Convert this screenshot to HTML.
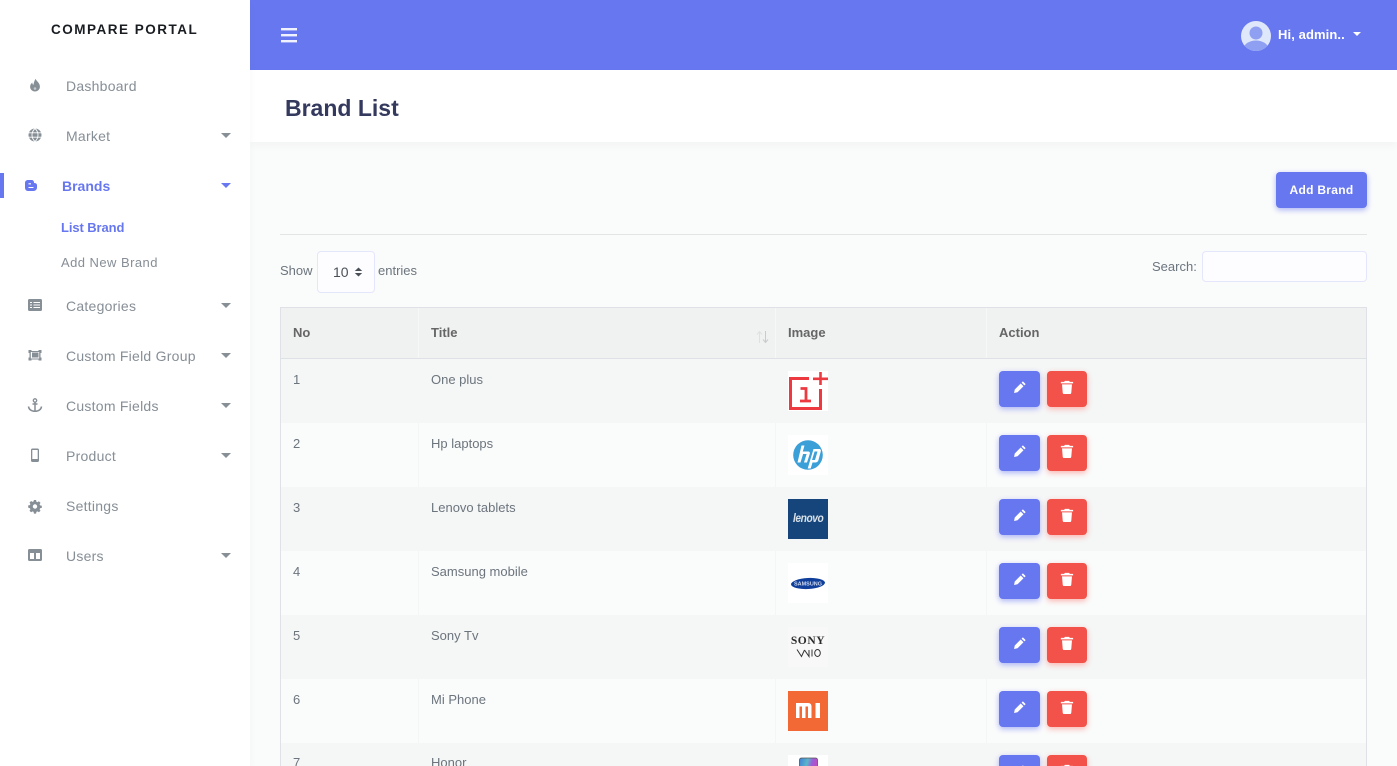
<!DOCTYPE html>
<html lang="en">
<head>
<meta charset="utf-8">
<title>Brand List</title>
<style>
html,body{margin:0;padding:0;width:1397px;height:766px;overflow:hidden;background:#fafbfb;font-family:"Liberation Sans",sans-serif;}
#wrap{position:absolute;left:0;top:0;width:1397px;height:766px;overflow:hidden;background:#fafbfb;}
.a{position:absolute;white-space:nowrap;}
#side{position:absolute;left:0;top:0;width:250px;height:766px;background:#fff;box-shadow:0 4px 8px rgba(0,0,0,.03);z-index:3;}
.nav{position:absolute;left:66px;font-size:14px;line-height:20px;color:#868e96;letter-spacing:.25px;white-space:nowrap;}
.ic{position:absolute;left:27px;width:16px;height:16px;fill:#868e96;}
.car{position:absolute;left:221px;width:0;height:0;border-left:5px solid transparent;border-right:5px solid transparent;border-top:5px solid #868e96;}
.t{position:absolute;font-size:13px;line-height:18px;color:#6c757d;white-space:nowrap;}
.th{position:absolute;font-size:13px;line-height:18px;font-weight:bold;color:#666;white-space:nowrap;top:324px;}
.row{position:absolute;left:281px;width:1085px;height:64px;}
.odd{background:#f5f6f6;}
.sep{position:absolute;top:0;bottom:0;width:1px;background:#f4f5f5;}
.logo{position:absolute;left:788px;width:40px;height:40px;background:#fff;overflow:hidden;}
.be{position:absolute;left:999px;width:41px;height:36px;border-radius:4px;background:#6777ef;box-shadow:0 2px 6px #acb5f6;}
.bd{position:absolute;left:1047px;width:40px;height:36px;border-radius:4px;background:#f2524a;box-shadow:0 2px 6px #fbb5b0;}
.be svg{position:absolute;left:14px;top:9px;width:14px;height:14px;fill:#fff;}
.bd svg{position:absolute;left:13px;top:9px;width:14px;height:14px;fill:#fff;}
</style>
</head>
<body>
<div id="wrap">

<div class="a" style="left:250px;top:0;width:1147px;height:70px;background:#6777ef;"></div>
<svg class="a" style="left:281px;top:28px" width="16" height="15"><rect y="0" width="16" height="2.400" fill="#fff" opacity=".9"/><rect y="6" width="16" height="2.400" fill="#fff" opacity=".9"/><rect y="12" width="16" height="2.400" fill="#fff" opacity=".9"/></svg>
<svg class="a" style="left:1241px;top:21px" width="30" height="30" viewBox="0 0 30 30"><defs><clipPath id="c"><circle cx="15" cy="15" r="15"/></clipPath></defs><circle cx="15" cy="15" r="15" fill="#dfe7fb"/><g clip-path="url(#c)"><circle cx="15" cy="12" r="6.500" fill="#8f9ff2"/><ellipse cx="15" cy="27" rx="12" ry="7.500" fill="#8f9ff2"/></g></svg>
<div class="a" style="left:1278px;top:25px;font-size:13px;line-height:20px;font-weight:bold;color:#fff;letter-spacing:.1px;">Hi, admin..</div>
<div class="a" style="left:1353px;top:32px;width:0;height:0;border-left:4px solid transparent;border-right:4px solid transparent;border-top:4px solid #fff;"></div>

<div class="a" style="left:250px;top:70px;width:1147px;height:72px;background:#fff;box-shadow:0 4px 8px rgba(0,0,0,.03);"></div>
<div class="a" style="left:285px;top:92px;font-size:23px;line-height:32px;font-weight:bold;color:#34395e;">Brand List</div>

<div id="side">
  <div class="a" style="left:51px;top:21px;font-size:13.500px;line-height:18px;font-weight:bold;color:#191d21;letter-spacing:1.500px;">COMPARE PORTAL</div>

  <svg class="ic" style="top:77px" viewBox="0 0 16 16"><path d="M8.600 1.800c.5 2.400 4.300 3.700 4.300 8 0 2.700-2.200 4.700-4.900 4.700S3.100 12.500 3.100 9.800c0-1.900 1-3.300 2.200-4.300 0 1.200.4 2 1.100 2.400.5-2.100.9-4 2.200-6.100z"/><circle cx="8" cy="11.500" r="1.300" fill="#c4c8cc"/></svg>
  <div class="nav" style="top:76px">Dashboard</div>

  <svg class="ic" style="top:127px" viewBox="0 0 16 16"><circle cx="8" cy="8" r="6.500"/><path d="M1.500 5.800h13M1.500 10.200h13M8 1.500c-4 3.500-4 9.500 0 13M8 1.500c4 3.500 4 9.500 0 13" fill="none" stroke="#fff" stroke-width=".9"/></svg>
  <div class="nav" style="top:126px">Market</div>
  <div class="car" style="top:133px"></div>

  <div class="a" style="left:0;top:173px;width:4px;height:25px;background:#6777ef;"></div>
  <svg class="ic" style="top:177px;left:23px" viewBox="0 0 16 16"><path d="M5 3h3.500c1.500 0 2.500 1 2.500 2.500v.5c2 0 3 .8 3 2.500v2c0 2-1.500 3.500-3.500 3.500H5C3 14 2 12.500 2 10.500V6c0-1.800 1.200-3 3-3z" fill="#6777ef"/><path d="M5.500 6.800h2.500M5.500 10.500h5" stroke="#fff" stroke-width="1.100" fill="none"/></svg>
  <div class="nav" style="top:176px;left:62px;color:#6777ef;font-weight:bold;letter-spacing:0;">Brands</div>
  <div class="car" style="top:183px;border-top-color:#6777ef"></div>

  <div class="nav" style="top:218px;left:61px;font-size:13px;color:#6777ef;font-weight:bold;letter-spacing:-.1px;">List Brand</div>
  <div class="nav" style="top:253px;left:61px;font-size:13px;letter-spacing:.45px;">Add New Brand</div>

  <svg class="ic" style="top:297px" viewBox="0 0 16 16"><path d="M2.500 2h11A1.500 1.500 0 0 1 15 3.500v9a1.500 1.500 0 0 1-1.500 1.500h-11A1.500 1.500 0 0 1 1 12.500v-9A1.500 1.500 0 0 1 2.500 2z"/><path d="M3 5.500h2M6.500 5.500H13M3 8h2M6.500 8H13M3 10.500h2M6.500 10.500H13" stroke="#fff" stroke-width="1.100" fill="none"/></svg>
  <div class="nav" style="top:296px">Categories</div>
  <div class="car" style="top:303px"></div>

  <svg class="ic" style="top:347px" viewBox="0 0 16 16"><path d="M1.500 3h3v1h7V3h3v3h-1v4.500h1v3h-3v-1h-7v1h-3v-3h1V6h-1z"/><rect x="3.800" y="5" width="8.400" height="6.500" fill="#fff"/><rect x="5" y="5.500" width="6.500" height="5"/></svg>
  <div class="nav" style="top:346px">Custom Field Group</div>
  <div class="car" style="top:353px"></div>

  <svg class="ic" style="top:397px" viewBox="0 0 16 16"><circle cx="8" cy="3.500" r="1.700" fill="none" stroke="#868e96" stroke-width="1.300"/><path d="M8 5v8.500M5.500 7h5" stroke="#868e96" stroke-width="1.500" fill="none"/><path d="M1.500 9.500c.3 3 3 4.800 6.500 4.800s6.200-1.800 6.500-4.800" fill="none" stroke="#868e96" stroke-width="1.500"/></svg>
  <div class="nav" style="top:396px">Custom Fields</div>
  <div class="car" style="top:403px"></div>

  <svg class="ic" style="top:447px" viewBox="0 0 16 16"><path d="M5.500 1.500h5C11.400 1.500 12 2.100 12 3v10.500c0 .9-.6 1.500-1.500 1.500h-5C4.600 15 4 14.400 4 13.500V3c0-.9.600-1.500 1.500-1.500zm-.2 1.500v9h5.400V3z"/></svg>
  <div class="nav" style="top:446px">Product</div>
  <div class="car" style="top:453px"></div>

  <svg class="ic" style="top:498px" viewBox="0 0 16 16"><path fill-rule="evenodd" d="M6.900 2h2.200l.3 1.700 1.100.5 1.400-.9 1.600 1.600-.9 1.400.5 1.100 1.700.3v2.200l-1.700.3-.5 1.100.9 1.400-1.600 1.600-1.400-.9-1.100.5-.3 1.700H6.900l-.3-1.700-1.100-.5-1.400.9-1.600-1.600.9-1.400-.5-1.100L1.200 9.600V7.400l1.700-.3.5-1.100-.9-1.400 1.600-1.600 1.400.9 1.100-.5zM8 6.300a2.200 2.200 0 1 0 0 4.400 2.200 2.200 0 0 0 0-4.400z"/></svg>
  <div class="nav" style="top:496px">Settings</div>

  <svg class="ic" style="top:547px" viewBox="0 0 16 16"><path fill-rule="evenodd" d="M2.500 2h11A1.500 1.500 0 0 1 15 3.500v9a1.500 1.500 0 0 1-1.500 1.500h-11A1.500 1.500 0 0 1 1 12.500v-9A1.500 1.500 0 0 1 2.500 2zM3 6v6h4V6zm6 0v6h4V6z"/></svg>
  <div class="nav" style="top:546px">Users</div>
  <div class="car" style="top:553px"></div>
</div>

<div class="a" style="left:1276px;top:172px;width:91px;height:36px;border-radius:4px;background:#6777ef;box-shadow:0 2px 6px #acb5f6;color:#fff;font-size:12px;font-weight:bold;line-height:36px;text-align:center;letter-spacing:.3px;">Add Brand</div>
<div class="a" style="left:280px;top:234px;width:1087px;height:1px;background:#e3e4e4;"></div>

<div class="t" style="left:280px;top:262px;">Show</div>
<div class="a" style="left:317px;top:251px;width:56px;height:40px;border:1px solid #e4e6fc;border-radius:4px;background:#fdfdff;"></div>
<div class="a" style="left:333px;top:263px;font-size:14px;line-height:18px;color:#495057;">10</div>
<svg class="a" style="left:354px;top:267px" width="9" height="10"><path d="M.8 4L4.500.5 8.200 4zM.8 6l3.700 3.500L8.200 6z" fill="#495057"/></svg>
<div class="t" style="left:378px;top:262px;">entries</div>
<div class="t" style="left:1152px;top:258px;">Search:</div>
<div class="a" style="left:1202px;top:251px;width:163px;height:29px;border:1px solid #e4e6fc;border-radius:4px;background:#fdfdff;"></div>

<div class="a" style="left:280px;top:307px;width:1085px;height:459px;border-left:1px solid #dee2e6;border-right:1px solid #dee2e6;"></div>
<div class="a" style="left:280px;top:307px;width:1087px;height:52px;box-sizing:border-box;border:1px solid #dee2e6;background:#f0f1f1;"></div>
<div class="a" style="left:418px;top:308px;width:1px;height:50px;background:#f6f7f7;"></div>
<div class="a" style="left:775px;top:308px;width:1px;height:50px;background:#f6f7f7;"></div>
<div class="a" style="left:986px;top:308px;width:1px;height:50px;background:#f6f7f7;"></div>
<div class="th" style="left:293px">No</div>
<div class="th" style="left:431px">Title</div>
<div class="th" style="left:788px">Image</div>
<div class="th" style="left:999px">Action</div>
<svg class="a" style="left:756px;top:330px" width="13" height="14" fill="none" stroke-width="1"><path d="M3.500 13V2M1 4.500L3.500 1.500 6 4.500" stroke="#e0e0e0"/><path d="M9.500 1v11M7 9.500l2.500 3 2.500-3" stroke="#c8cacc"/></svg>

<div class="row odd" style="top:359px"></div>
<div class="row" style="top:423px"><div class="sep" style="left:137px"></div><div class="sep" style="left:494px"></div><div class="sep" style="left:705px"></div></div>
<div class="row odd" style="top:487px"></div>
<div class="row" style="top:551px"><div class="sep" style="left:137px"></div><div class="sep" style="left:494px"></div><div class="sep" style="left:705px"></div></div>
<div class="row odd" style="top:615px"></div>
<div class="row" style="top:679px"><div class="sep" style="left:137px"></div><div class="sep" style="left:494px"></div><div class="sep" style="left:705px"></div></div>
<div class="row odd" style="top:743px;height:23px"></div>

<div class="t" style="left:293px;top:371px">1</div><div class="t" style="left:431px;top:371px">One plus</div>
<div class="t" style="left:293px;top:435px">2</div><div class="t" style="left:431px;top:435px">Hp laptops</div>
<div class="t" style="left:293px;top:499px">3</div><div class="t" style="left:431px;top:499px">Lenovo tablets</div>
<div class="t" style="left:293px;top:563px">4</div><div class="t" style="left:431px;top:563px">Samsung mobile</div>
<div class="t" style="left:293px;top:627px">5</div><div class="t" style="left:431px;top:627px">Sony Tv</div>
<div class="t" style="left:293px;top:691px">6</div><div class="t" style="left:431px;top:691px">Mi Phone</div>
<div class="t" style="left:293px;top:754px">7</div><div class="t" style="left:431px;top:754px">Honor</div>

<!-- logos -->
<div class="logo" style="top:371px"><svg width="40" height="40" viewBox="0 0 40 40"><path d="M21 7.500H2.500v30h30V18" fill="none" stroke="#ec3a40" stroke-width="3"/><path d="M32.500 1v13M25 7.800h15" stroke="#ec3a40" stroke-width="2.600" fill="none"/><path d="M12.500 17.500h5.500V30M12 30h11" fill="none" stroke="#ec3a40" stroke-width="2.800"/></svg></div>
<div class="logo" style="top:435px"><svg width="40" height="40" viewBox="0 0 40 40"><circle cx="20" cy="20" r="14.800" fill="#3b9fd8"/><path d="M13.500 10.500h3l-1.700 6H20c1.500 0 2.200 1 1.800 2.300L19 27.500h-3l2.600-8.500h-3.500l-2.600 8.500h-3z" fill="#fff"/><path fill-rule="evenodd" d="M25.500 14H31c1.500 0 2.200 1 1.800 2.300L30.500 25c-.4 1.300-1.400 2.500-3 2.500h-3l-1.800 6h-3zm1.100 2.500L24 25h3l2.500-8.500z" fill="#fff"/></svg></div>
<div class="logo" style="top:499px;background:#15457a"><div class="a" style="left:5px;top:11px;font-size:12px;line-height:16px;color:#d8e1ea;font-style:italic;font-weight:bold;letter-spacing:-.5px;transform:scaleX(.85);transform-origin:left center;">lenovo</div></div>
<div class="logo" style="top:563px"><svg width="40" height="40" viewBox="0 0 40 40"><ellipse cx="20" cy="20.500" rx="17" ry="5.500" fill="#0f3f9a" transform="rotate(-3 20 20.500)"/><text x="20" y="22.500" font-family="Liberation Sans" font-size="5.500" font-weight="bold" fill="#cfd8ee" text-anchor="middle">SAMSUNG</text></svg></div>
<div class="logo" style="top:627px;background:#f8f8f8"><div class="a" style="left:2px;top:8px;width:36px;text-align:center;font-family:'Liberation Serif',serif;font-weight:bold;font-size:11.500px;line-height:12px;color:#2b2b2b;letter-spacing:.6px;">SONY</div><svg class="a" style="left:8px;top:21px" width="26" height="10" fill="none" stroke="#333" stroke-width="1"><path d="M1 1.500l4.500 7 3-6.500M8.500 2l4.500 6.500V2M16 1.500v7"/><ellipse cx="21.500" cy="5" rx="2.800" ry="3.500"/></svg></div>
<div class="logo" style="top:691px;background:#f26935"><svg width="40" height="40" viewBox="0 0 40 40"><path d="M8 12h12c2.500 0 3.500 1.500 3.500 3.500V27H20V15.500h-2.500V27H14V15.500h-2.500V27H8zM27.500 12H32v15h-4.500z" fill="#fff"/></svg></div>
<div class="logo" style="top:755px;height:11px"><svg width="40" height="11" viewBox="0 0 40 11"><defs><linearGradient id="h" x1="0" x2="1" y1="0" y2=".3"><stop offset="0" stop-color="#3f7fd6"/><stop offset=".45" stop-color="#5bb6c9"/><stop offset=".7" stop-color="#9a5fd8"/><stop offset="1" stop-color="#c04bc0"/></linearGradient></defs><rect x="11.500" y="1" width="18" height="20" rx="2" fill="url(#h)" stroke="#555" stroke-width=".8"/></svg></div>

<!-- buttons -->
<div class="be" style="top:371px"><svg viewBox="0 0 16 16"><path d="M11.300 1.500l3.200 3.200-1.500 1.500-3.200-3.200zM8.800 4l3.200 3.200-6.800 6.800-4 .8.800-4z"/></svg></div>
<div class="bd" style="top:371px"><svg viewBox="0 0 16 16"><path d="M5.500 1h5l.7 1.200H15v1.600H1V2.200h3.800zM2.300 5h11.400l-.8 9.500c-.1.900-.7 1.500-1.500 1.500H4.600c-.8 0-1.400-.6-1.500-1.500z"/></svg></div>
<div class="be" style="top:435px"><svg viewBox="0 0 16 16"><path d="M11.300 1.500l3.200 3.200-1.500 1.500-3.200-3.200zM8.800 4l3.200 3.200-6.800 6.800-4 .8.800-4z"/></svg></div>
<div class="bd" style="top:435px"><svg viewBox="0 0 16 16"><path d="M5.500 1h5l.7 1.200H15v1.600H1V2.200h3.800zM2.300 5h11.400l-.8 9.500c-.1.900-.7 1.500-1.500 1.500H4.600c-.8 0-1.400-.6-1.500-1.500z"/></svg></div>
<div class="be" style="top:499px"><svg viewBox="0 0 16 16"><path d="M11.300 1.500l3.200 3.200-1.500 1.500-3.200-3.200zM8.800 4l3.200 3.200-6.800 6.800-4 .8.800-4z"/></svg></div>
<div class="bd" style="top:499px"><svg viewBox="0 0 16 16"><path d="M5.500 1h5l.7 1.200H15v1.600H1V2.200h3.800zM2.300 5h11.400l-.8 9.500c-.1.900-.7 1.500-1.500 1.500H4.600c-.8 0-1.400-.6-1.500-1.500z"/></svg></div>
<div class="be" style="top:563px"><svg viewBox="0 0 16 16"><path d="M11.300 1.500l3.200 3.200-1.500 1.500-3.200-3.200zM8.800 4l3.200 3.200-6.800 6.800-4 .8.800-4z"/></svg></div>
<div class="bd" style="top:563px"><svg viewBox="0 0 16 16"><path d="M5.500 1h5l.7 1.200H15v1.600H1V2.200h3.800zM2.300 5h11.400l-.8 9.500c-.1.900-.7 1.500-1.500 1.500H4.600c-.8 0-1.400-.6-1.500-1.500z"/></svg></div>
<div class="be" style="top:627px"><svg viewBox="0 0 16 16"><path d="M11.300 1.500l3.200 3.200-1.500 1.500-3.200-3.200zM8.800 4l3.200 3.200-6.800 6.800-4 .8.800-4z"/></svg></div>
<div class="bd" style="top:627px"><svg viewBox="0 0 16 16"><path d="M5.500 1h5l.7 1.200H15v1.600H1V2.200h3.800zM2.300 5h11.400l-.8 9.500c-.1.900-.7 1.500-1.500 1.500H4.600c-.8 0-1.400-.6-1.500-1.500z"/></svg></div>
<div class="be" style="top:691px"><svg viewBox="0 0 16 16"><path d="M11.300 1.500l3.200 3.200-1.500 1.500-3.200-3.200zM8.800 4l3.200 3.200-6.800 6.800-4 .8.800-4z"/></svg></div>
<div class="bd" style="top:691px"><svg viewBox="0 0 16 16"><path d="M5.500 1h5l.7 1.200H15v1.600H1V2.200h3.800zM2.300 5h11.400l-.8 9.500c-.1.900-.7 1.500-1.500 1.500H4.600c-.8 0-1.400-.6-1.500-1.500z"/></svg></div>
<div class="be" style="top:755px"><svg viewBox="0 0 16 16"><path d="M11.300 1.500l3.200 3.200-1.500 1.500-3.200-3.200zM8.800 4l3.200 3.200-6.800 6.800-4 .8.800-4z"/></svg></div>
<div class="bd" style="top:755px"><svg viewBox="0 0 16 16"><path d="M5.500 1h5l.7 1.200H15v1.600H1V2.200h3.800zM2.300 5h11.400l-.8 9.500c-.1.900-.7 1.500-1.500 1.500H4.600c-.8 0-1.400-.6-1.500-1.500z"/></svg></div>

</div>
</body>
</html>
